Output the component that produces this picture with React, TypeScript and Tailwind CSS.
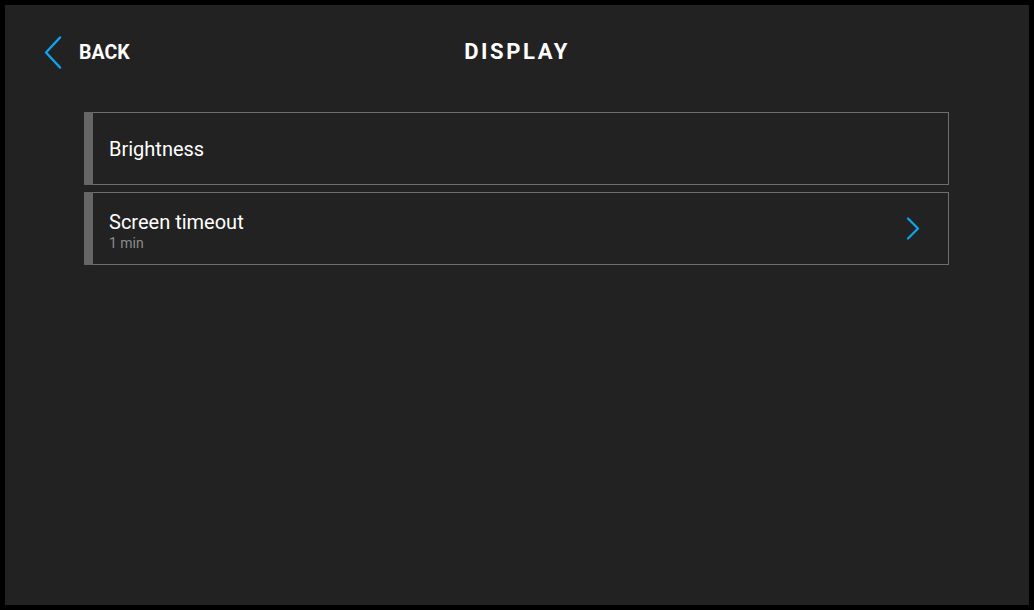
import React from 'react';

type Item = {
  title: string;
  subtitle?: string;
  hasArrow?: boolean;
};

const items: Item[] = [
  { title: 'Brightness' },
  { title: 'Screen timeout', subtitle: '1 min', hasArrow: true },
];

const App: React.FC = () => {
  return (
    <div className="w-[1034px] h-[610px] bg-black p-[5px] font-['Roboto',sans-serif]">
      <div className="h-full w-full bg-[#222222] flex flex-col">
        {/* Header */}
        <div className="h-[94px] grid grid-cols-[1fr_auto_1fr] items-center">
          <div className="flex items-center pl-[39px]">
            <svg width="18" height="33" viewBox="0 0 18 33" className="mr-[17px]">
              <polyline
                points="16,1.5 2,16.5 16,31.5"
                fill="none"
                stroke="#10a4ee"
                strokeWidth="2.4"
                strokeLinecap="round"
                strokeLinejoin="round"
              />
            </svg>
            <span className="text-white text-[19.5px] font-bold leading-none pt-[2px]">BACK</span>
          </div>
          <h1 className="text-white text-[22px] font-bold tracking-[2.6px] leading-none">DISPLAY</h1>
          <div />
        </div>

        {/* List */}
        <div className="pt-[13px] pl-[79px] pr-[80px] flex flex-col gap-[7px]">
          {items.map((item) => (
            <div
              key={item.title}
              className="h-[73px] flex border-y border-r border-[#6e6e6e]"
            >
              <div className="w-[9px] bg-[#666666] -my-px" />
              <div className="flex-1 flex items-center pl-[16px] pr-[28px]">
                <div className={item.subtitle ? 'flex-1 flex flex-col pt-[4px]' : 'flex-1 flex flex-col'}>
                  <span className="text-white text-[20px] leading-[24px]">{item.title}</span>
                  {item.subtitle && (
                    <span className="text-[#8c8c8c] text-[14px] leading-[18px]">{item.subtitle}</span>
                  )}
                </div>
                {item.hasArrow && (
                  <svg width="14" height="23" viewBox="0 0 14 23">
                    <polyline
                      points="2,1.5 12,11.5 2,21.5"
                      fill="none"
                      stroke="#10a4ee"
                      strokeWidth="2.2"
                      strokeLinecap="round"
                      strokeLinejoin="round"
                    />
                  </svg>
                )}
              </div>
            </div>
          ))}
        </div>
      </div>
    </div>
  );
};

export default App;
